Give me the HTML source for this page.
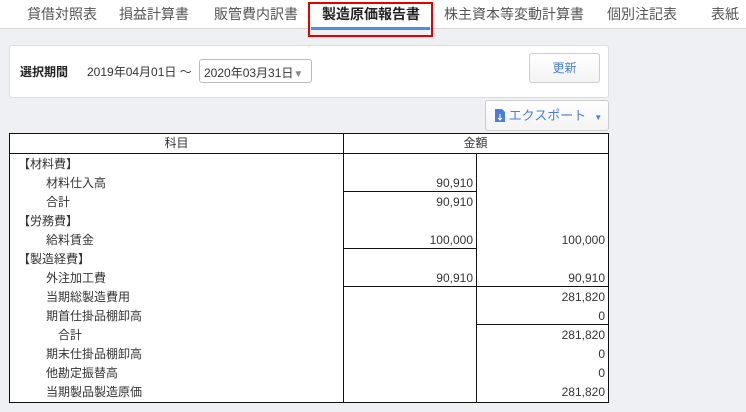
<!DOCTYPE html>
<html><head><meta charset="utf-8"><style>
*{margin:0;padding:0;box-sizing:border-box}
body{width:746px;height:412px;overflow:hidden;background:#eff0f4;font-family:"Liberation Sans","Noto Sans CJK JP",sans-serif;color:#333;position:relative}
.nav{position:absolute;left:0;top:0;width:746px;height:29px;background:#fff;border-bottom:1px solid #d8d8d8}
.tab{position:absolute;top:4px;font-size:14px;color:#555;white-space:nowrap}
.red{position:absolute;left:308px;top:2px;width:125px;height:35px;border:2px solid #e60000}
.blue{position:absolute;left:311px;top:27px;width:119px;height:3px;background:#4a90e2}
.panel{position:absolute;left:9px;top:45px;width:600px;height:53px;background:#fff;border:1px solid #dcdde2;border-radius:3px}
.a{position:absolute;white-space:nowrap}
.btn{position:absolute;background:linear-gradient(#fff,#f3f3f3);border:1px solid #ccc;border-radius:3px;color:#4a7fd6;font-size:12px;text-align:center;white-space:nowrap}
.t{position:absolute;left:9px;top:133px;width:600px;height:270px;background:#fff;border:1.5px solid #111}
.l{position:absolute;background:#111}
.c{position:absolute;font-size:12px;color:#333;white-space:nowrap;line-height:19px}
.n{text-align:right}
</style></head><body>
<div class="nav">
<span class="tab" style="left:27px">貸借対照表</span>
<span class="tab" style="left:119px">損益計算書</span>
<span class="tab" style="left:214px">販管費内訳書</span>
<span class="tab" style="left:322px;color:#222;font-weight:bold">製造原価報告書</span>
<span class="tab" style="left:444px">株主資本等変動計算書</span>
<span class="tab" style="left:607px">個別注記表</span>
<span class="tab" style="left:711px">表紙</span>
</div>
<div class="blue"></div>
<div class="red"></div>
<div class="panel">
<span class="a" style="left:10px;top:17px;font-size:12px;font-weight:bold;color:#222">選択期間</span>
<span class="a" style="left:77px;top:17px;font-size:12px">2019年04月01日 ～</span>
<div class="a" style="left:189px;top:13px;width:113px;height:24px;border:1px solid #bbb;border-radius:3px;font-size:12px;padding:4px 0 0 4px">2020年03月31日<span style="color:#888;font-size:10px">▼</span></div>
<div class="btn" style="left:519px;top:7px;width:71px;height:30px;line-height:28px">更新</div>
</div>
<div class="btn" style="left:485px;top:100px;width:124px;height:31px;line-height:29px;text-align:left;padding-left:9px;font-size:13px"><svg width="10" height="13" style="vertical-align:-2px"><path d="M0 0H7L10 3V13H0Z" fill="#4a7fd6"/><path d="M5 5V11M3 9L5 11L7 9" stroke="#fff" fill="none"/></svg> エクスポート<span style="font-size:8px;margin-left:8px">▼</span></div>
<div class="t">
<div class="l" style="left:333px;top:0;width:1px;height:268px"></div>
<div class="l" style="left:0;top:19px;width:598px;height:1px"></div>
<div class="l" style="left:466px;top:20px;width:1px;height:248px"></div>
<div class="l" style="left:333px;top:57px;width:133px;height:1px"></div>
<div class="l" style="left:333px;top:114px;width:133px;height:1px"></div>
<div class="l" style="left:333px;top:152px;width:265px;height:1px"></div>
<div class="l" style="left:466px;top:190px;width:132px;height:1px"></div>
<div class="c" style="left:0;width:333px;top:0;text-align:center">科目</div>
<div class="c" style="left:333px;width:265px;top:0;text-align:center">金額</div>
</div>
<div style="position:absolute;left:0;top:155px">
<div class="c" style="left:18px;top:0">【材料費】</div>
<div class="c" style="left:46px;top:19px">材料仕入高</div>
<div class="c" style="left:46px;top:38px">合計</div>
<div class="c" style="left:18px;top:57px">【労務費】</div>
<div class="c" style="left:46px;top:76px">給料賃金</div>
<div class="c" style="left:18px;top:95px">【製造経費】</div>
<div class="c" style="left:46px;top:114px">外注加工費</div>
<div class="c" style="left:46px;top:133px">当期総製造費用</div>
<div class="c" style="left:46px;top:152px">期首仕掛品棚卸高</div>
<div class="c" style="left:58px;top:171px">合計</div>
<div class="c" style="left:46px;top:190px">期末仕掛品棚卸高</div>
<div class="c" style="left:46px;top:209px">他勘定振替高</div>
<div class="c" style="left:46px;top:228px">当期製品製造原価</div>
<div class="c n" style="left:350px;width:123px;top:19px">90,910</div>
<div class="c n" style="left:350px;width:123px;top:38px">90,910</div>
<div class="c n" style="left:350px;width:123px;top:76px">100,000</div>
<div class="c n" style="left:350px;width:123px;top:114px">90,910</div>
<div class="c n" style="left:480px;width:125px;top:76px">100,000</div>
<div class="c n" style="left:480px;width:125px;top:114px">90,910</div>
<div class="c n" style="left:480px;width:125px;top:133px">281,820</div>
<div class="c n" style="left:480px;width:125px;top:152px">0</div>
<div class="c n" style="left:480px;width:125px;top:171px">281,820</div>
<div class="c n" style="left:480px;width:125px;top:190px">0</div>
<div class="c n" style="left:480px;width:125px;top:209px">0</div>
<div class="c n" style="left:480px;width:125px;top:228px">281,820</div>
</div>
</body></html>
